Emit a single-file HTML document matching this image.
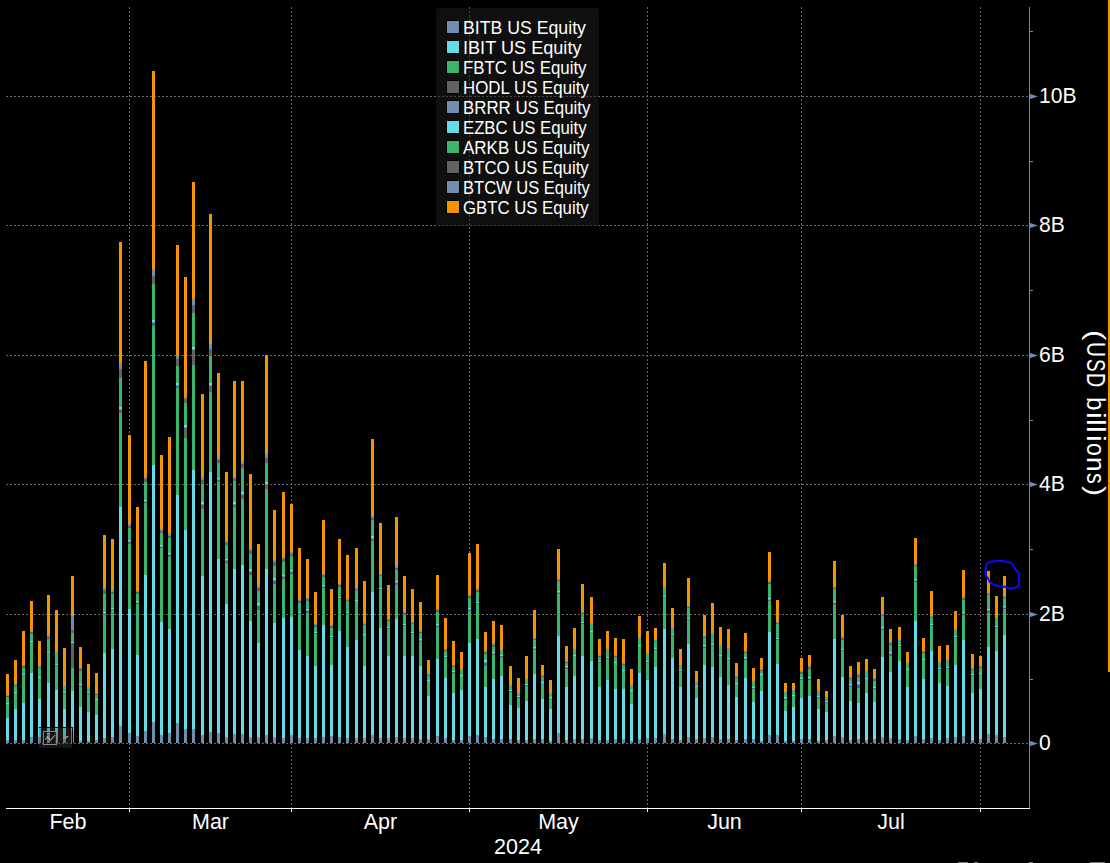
<!DOCTYPE html>
<html><head><meta charset="utf-8">
<style>
html,body{margin:0;padding:0;background:#000;}
body{width:1110px;height:863px;position:relative;overflow:hidden;font-family:"Liberation Sans",sans-serif;color:#fff;}
svg{position:absolute;left:0;top:0;}
.yl{position:absolute;left:1039px;font-size:21.5px;line-height:21.5px;white-space:nowrap;transform-origin:0 0;transform:scale(0.98,1.055);}
.ml{position:absolute;top:812px;width:80px;text-align:center;font-size:21.5px;line-height:21.5px;}
.yr{position:absolute;left:1039px;top:834px;}
.leg{position:absolute;left:436px;top:7.7px;width:163.3px;height:218.7px;background:rgba(32,32,32,0.46);border-radius:2px;}
.li{position:absolute;left:0;height:20px;}
.sw{position:absolute;left:10.5px;top:0;width:12px;height:12px;box-shadow:0 0 0 1px #000;}
.lt{position:absolute;transform-origin:0 0;left:26.5px;top:-1px;font-size:17.8px;line-height:17.8px;white-space:nowrap;}
.ulab{position:absolute;left:1109px;top:0;transform-origin:0 0;transform:rotate(90deg);width:600px;height:30px;}
.ulab span{position:absolute;top:0;transform-origin:0 0;font-size:26px;line-height:26px;}
</style></head><body>
<svg width="1110" height="863" viewBox="0 0 1110 863">
<line x1="129.5" y1="7" x2="129.5" y2="808" stroke="#646464" stroke-width="1" stroke-dasharray="2 2"/>
<line x1="291.5" y1="7" x2="291.5" y2="808" stroke="#646464" stroke-width="1" stroke-dasharray="2 2"/>
<line x1="469.5" y1="7" x2="469.5" y2="808" stroke="#646464" stroke-width="1" stroke-dasharray="2 2"/>
<line x1="647.5" y1="7" x2="647.5" y2="808" stroke="#646464" stroke-width="1" stroke-dasharray="2 2"/>
<line x1="801.5" y1="7" x2="801.5" y2="808" stroke="#646464" stroke-width="1" stroke-dasharray="2 2"/>
<line x1="980.5" y1="7" x2="980.5" y2="808" stroke="#646464" stroke-width="1" stroke-dasharray="2 2"/>
<line x1="6" y1="96.5" x2="1029" y2="96.5" stroke="#686868" stroke-width="1" stroke-dasharray="2 2"/>
<line x1="6" y1="225.5" x2="1029" y2="225.5" stroke="#686868" stroke-width="1" stroke-dasharray="2 2"/>
<line x1="6" y1="355.5" x2="1029" y2="355.5" stroke="#686868" stroke-width="1" stroke-dasharray="2 2"/>
<line x1="6" y1="484.5" x2="1029" y2="484.5" stroke="#686868" stroke-width="1" stroke-dasharray="2 2"/>
<line x1="6" y1="614.5" x2="1029" y2="614.5" stroke="#686868" stroke-width="1" stroke-dasharray="2 2"/>
<line x1="6" y1="743.5" x2="1029" y2="743.5" stroke="#686868" stroke-width="1" stroke-dasharray="2 2"/>
<rect x="6" y="674" width="3" height="21" fill="#f39400"/>
<rect x="6" y="695" width="3" height="1" fill="#728ead"/>
<rect x="6" y="696" width="3" height="1" fill="#626262"/>
<rect x="6" y="697" width="3" height="6" fill="#39b56d"/>
<rect x="6" y="703" width="3" height="1" fill="#66dce9"/>
<rect x="6" y="704" width="3" height="14" fill="#39b56d"/>
<rect x="6" y="718" width="3" height="22" fill="#66dce9"/>
<rect x="6" y="740" width="3" height="3" fill="#728ead"/>
<rect x="14" y="660" width="3" height="24" fill="#f39400"/>
<rect x="14" y="684" width="3" height="1" fill="#728ead"/>
<rect x="14" y="685" width="3" height="1" fill="#626262"/>
<rect x="14" y="686" width="3" height="6" fill="#39b56d"/>
<rect x="14" y="692" width="3" height="1" fill="#66dce9"/>
<rect x="14" y="693" width="3" height="16" fill="#39b56d"/>
<rect x="14" y="709" width="3" height="31" fill="#66dce9"/>
<rect x="14" y="740" width="3" height="3" fill="#728ead"/>
<rect x="22" y="631" width="3" height="34" fill="#f39400"/>
<rect x="22" y="665" width="3" height="1" fill="#728ead"/>
<rect x="22" y="666" width="3" height="2" fill="#626262"/>
<rect x="22" y="668" width="3" height="6" fill="#39b56d"/>
<rect x="22" y="674" width="3" height="1" fill="#66dce9"/>
<rect x="22" y="675" width="3" height="1" fill="#626262"/>
<rect x="22" y="676" width="3" height="27" fill="#39b56d"/>
<rect x="22" y="703" width="3" height="37" fill="#66dce9"/>
<rect x="22" y="740" width="3" height="3" fill="#728ead"/>
<rect x="30" y="601" width="3" height="30" fill="#f39400"/>
<rect x="30" y="631" width="3" height="1" fill="#728ead"/>
<rect x="30" y="632" width="3" height="2" fill="#626262"/>
<rect x="30" y="634" width="3" height="7" fill="#39b56d"/>
<rect x="30" y="641" width="3" height="1" fill="#66dce9"/>
<rect x="30" y="642" width="3" height="31" fill="#39b56d"/>
<rect x="30" y="673" width="3" height="64" fill="#66dce9"/>
<rect x="30" y="737" width="3" height="6" fill="#728ead"/>
<rect x="38" y="641" width="3" height="25" fill="#f39400"/>
<rect x="38" y="666" width="3" height="1" fill="#728ead"/>
<rect x="38" y="667" width="3" height="1" fill="#626262"/>
<rect x="38" y="668" width="3" height="9" fill="#39b56d"/>
<rect x="38" y="677" width="3" height="1" fill="#66dce9"/>
<rect x="38" y="678" width="3" height="21" fill="#39b56d"/>
<rect x="38" y="699" width="3" height="38" fill="#66dce9"/>
<rect x="38" y="737" width="3" height="6" fill="#728ead"/>
<rect x="47" y="595" width="3" height="40" fill="#f39400"/>
<rect x="47" y="635" width="3" height="2" fill="#728ead"/>
<rect x="47" y="637" width="3" height="2" fill="#626262"/>
<rect x="47" y="639" width="3" height="13" fill="#39b56d"/>
<rect x="47" y="652" width="3" height="1" fill="#66dce9"/>
<rect x="47" y="653" width="3" height="1" fill="#626262"/>
<rect x="47" y="654" width="3" height="29" fill="#39b56d"/>
<rect x="47" y="683" width="3" height="51" fill="#66dce9"/>
<rect x="47" y="734" width="3" height="9" fill="#728ead"/>
<rect x="55" y="610" width="3" height="42" fill="#f39400"/>
<rect x="55" y="652" width="3" height="12" fill="#39b56d"/>
<rect x="55" y="664" width="3" height="1" fill="#66dce9"/>
<rect x="55" y="665" width="3" height="1" fill="#626262"/>
<rect x="55" y="666" width="3" height="24" fill="#39b56d"/>
<rect x="55" y="690" width="3" height="44" fill="#66dce9"/>
<rect x="55" y="734" width="3" height="9" fill="#728ead"/>
<rect x="63" y="648" width="3" height="38" fill="#f39400"/>
<rect x="63" y="686" width="3" height="1" fill="#728ead"/>
<rect x="63" y="687" width="3" height="5" fill="#39b56d"/>
<rect x="63" y="692" width="3" height="1" fill="#66dce9"/>
<rect x="63" y="693" width="3" height="1" fill="#626262"/>
<rect x="63" y="694" width="3" height="15" fill="#39b56d"/>
<rect x="63" y="709" width="3" height="30" fill="#66dce9"/>
<rect x="63" y="739" width="3" height="4" fill="#728ead"/>
<rect x="71" y="576" width="3" height="40" fill="#f39400"/>
<rect x="71" y="616" width="3" height="14" fill="#728ead"/>
<rect x="71" y="630" width="3" height="3" fill="#626262"/>
<rect x="71" y="633" width="3" height="9" fill="#39b56d"/>
<rect x="71" y="642" width="3" height="1" fill="#66dce9"/>
<rect x="71" y="643" width="3" height="25" fill="#626262"/>
<rect x="71" y="668" width="3" height="23" fill="#39b56d"/>
<rect x="71" y="691" width="3" height="40" fill="#66dce9"/>
<rect x="71" y="731" width="3" height="12" fill="#728ead"/>
<rect x="79" y="647" width="3" height="21" fill="#f39400"/>
<rect x="79" y="668" width="3" height="1" fill="#728ead"/>
<rect x="79" y="669" width="3" height="2" fill="#626262"/>
<rect x="79" y="671" width="3" height="13" fill="#39b56d"/>
<rect x="79" y="684" width="3" height="1" fill="#66dce9"/>
<rect x="79" y="685" width="3" height="1" fill="#728ead"/>
<rect x="79" y="686" width="3" height="1" fill="#626262"/>
<rect x="79" y="687" width="3" height="20" fill="#39b56d"/>
<rect x="79" y="707" width="3" height="34" fill="#66dce9"/>
<rect x="79" y="741" width="3" height="2" fill="#728ead"/>
<rect x="87" y="664" width="3" height="23" fill="#f39400"/>
<rect x="87" y="687" width="3" height="1" fill="#728ead"/>
<rect x="87" y="688" width="3" height="4" fill="#39b56d"/>
<rect x="87" y="692" width="3" height="1" fill="#66dce9"/>
<rect x="87" y="693" width="3" height="1" fill="#626262"/>
<rect x="87" y="694" width="3" height="18" fill="#39b56d"/>
<rect x="87" y="712" width="3" height="29" fill="#66dce9"/>
<rect x="87" y="741" width="3" height="2" fill="#728ead"/>
<rect x="95" y="673" width="3" height="20" fill="#f39400"/>
<rect x="95" y="693" width="3" height="1" fill="#728ead"/>
<rect x="95" y="694" width="3" height="1" fill="#626262"/>
<rect x="95" y="695" width="3" height="4" fill="#39b56d"/>
<rect x="95" y="699" width="3" height="1" fill="#66dce9"/>
<rect x="95" y="700" width="3" height="15" fill="#39b56d"/>
<rect x="95" y="715" width="3" height="25" fill="#66dce9"/>
<rect x="95" y="740" width="3" height="3" fill="#728ead"/>
<rect x="103" y="535" width="3" height="53" fill="#f39400"/>
<rect x="103" y="588" width="3" height="2" fill="#728ead"/>
<rect x="103" y="590" width="3" height="4" fill="#626262"/>
<rect x="103" y="594" width="3" height="18" fill="#39b56d"/>
<rect x="103" y="612" width="3" height="1" fill="#66dce9"/>
<rect x="103" y="613" width="3" height="1" fill="#728ead"/>
<rect x="103" y="614" width="3" height="1" fill="#626262"/>
<rect x="103" y="615" width="3" height="38" fill="#39b56d"/>
<rect x="103" y="653" width="3" height="85" fill="#66dce9"/>
<rect x="103" y="738" width="3" height="5" fill="#728ead"/>
<rect x="111" y="539" width="3" height="51" fill="#f39400"/>
<rect x="111" y="590" width="3" height="2" fill="#728ead"/>
<rect x="111" y="592" width="3" height="2" fill="#626262"/>
<rect x="111" y="594" width="3" height="14" fill="#39b56d"/>
<rect x="111" y="608" width="3" height="1" fill="#66dce9"/>
<rect x="111" y="609" width="3" height="1" fill="#626262"/>
<rect x="111" y="610" width="3" height="39" fill="#39b56d"/>
<rect x="111" y="649" width="3" height="88" fill="#66dce9"/>
<rect x="111" y="737" width="3" height="6" fill="#728ead"/>
<rect x="119" y="242" width="3" height="121" fill="#f39400"/>
<rect x="119" y="363" width="3" height="6" fill="#728ead"/>
<rect x="119" y="369" width="3" height="9" fill="#626262"/>
<rect x="119" y="378" width="3" height="29" fill="#39b56d"/>
<rect x="119" y="407" width="3" height="2" fill="#66dce9"/>
<rect x="119" y="409" width="3" height="1" fill="#728ead"/>
<rect x="119" y="410" width="3" height="3" fill="#626262"/>
<rect x="119" y="413" width="3" height="94" fill="#39b56d"/>
<rect x="119" y="507" width="3" height="219" fill="#66dce9"/>
<rect x="119" y="726" width="3" height="17" fill="#728ead"/>
<rect x="128" y="435" width="3" height="89" fill="#f39400"/>
<rect x="128" y="524" width="3" height="2" fill="#728ead"/>
<rect x="128" y="526" width="3" height="2" fill="#626262"/>
<rect x="128" y="528" width="3" height="12" fill="#39b56d"/>
<rect x="128" y="540" width="3" height="1" fill="#66dce9"/>
<rect x="128" y="541" width="3" height="1" fill="#728ead"/>
<rect x="128" y="542" width="3" height="2" fill="#626262"/>
<rect x="128" y="544" width="3" height="65" fill="#39b56d"/>
<rect x="128" y="609" width="3" height="124" fill="#66dce9"/>
<rect x="128" y="733" width="3" height="10" fill="#728ead"/>
<rect x="136" y="507" width="3" height="84" fill="#f39400"/>
<rect x="136" y="591" width="3" height="1" fill="#728ead"/>
<rect x="136" y="592" width="3" height="2" fill="#626262"/>
<rect x="136" y="594" width="3" height="7" fill="#39b56d"/>
<rect x="136" y="601" width="3" height="1" fill="#66dce9"/>
<rect x="136" y="602" width="3" height="1" fill="#728ead"/>
<rect x="136" y="603" width="3" height="1" fill="#626262"/>
<rect x="136" y="604" width="3" height="51" fill="#39b56d"/>
<rect x="136" y="655" width="3" height="81" fill="#66dce9"/>
<rect x="136" y="736" width="3" height="7" fill="#728ead"/>
<rect x="144" y="361" width="3" height="116" fill="#f39400"/>
<rect x="144" y="477" width="3" height="2" fill="#728ead"/>
<rect x="144" y="479" width="3" height="3" fill="#626262"/>
<rect x="144" y="482" width="3" height="18" fill="#39b56d"/>
<rect x="144" y="500" width="3" height="1" fill="#66dce9"/>
<rect x="144" y="501" width="3" height="1" fill="#728ead"/>
<rect x="144" y="502" width="3" height="1" fill="#626262"/>
<rect x="144" y="503" width="3" height="72" fill="#39b56d"/>
<rect x="144" y="575" width="3" height="156" fill="#66dce9"/>
<rect x="144" y="731" width="3" height="12" fill="#728ead"/>
<rect x="152" y="71" width="3" height="199" fill="#f39400"/>
<rect x="152" y="270" width="3" height="6" fill="#728ead"/>
<rect x="152" y="276" width="3" height="8" fill="#626262"/>
<rect x="152" y="284" width="3" height="36" fill="#39b56d"/>
<rect x="152" y="320" width="3" height="2" fill="#66dce9"/>
<rect x="152" y="322" width="3" height="1" fill="#728ead"/>
<rect x="152" y="323" width="3" height="3" fill="#626262"/>
<rect x="152" y="326" width="3" height="139" fill="#39b56d"/>
<rect x="152" y="465" width="3" height="257" fill="#66dce9"/>
<rect x="152" y="722" width="3" height="21" fill="#728ead"/>
<rect x="160" y="455" width="3" height="74" fill="#f39400"/>
<rect x="160" y="529" width="3" height="2" fill="#728ead"/>
<rect x="160" y="531" width="3" height="2" fill="#626262"/>
<rect x="160" y="533" width="3" height="12" fill="#39b56d"/>
<rect x="160" y="545" width="3" height="1" fill="#66dce9"/>
<rect x="160" y="546" width="3" height="1" fill="#728ead"/>
<rect x="160" y="547" width="3" height="1" fill="#626262"/>
<rect x="160" y="548" width="3" height="74" fill="#39b56d"/>
<rect x="160" y="622" width="3" height="113" fill="#66dce9"/>
<rect x="160" y="735" width="3" height="8" fill="#728ead"/>
<rect x="168" y="437" width="3" height="97" fill="#f39400"/>
<rect x="168" y="534" width="3" height="2" fill="#728ead"/>
<rect x="168" y="536" width="3" height="2" fill="#626262"/>
<rect x="168" y="538" width="3" height="15" fill="#39b56d"/>
<rect x="168" y="553" width="3" height="1" fill="#66dce9"/>
<rect x="168" y="554" width="3" height="1" fill="#728ead"/>
<rect x="168" y="555" width="3" height="2" fill="#626262"/>
<rect x="168" y="557" width="3" height="72" fill="#39b56d"/>
<rect x="168" y="629" width="3" height="104" fill="#66dce9"/>
<rect x="168" y="733" width="3" height="10" fill="#728ead"/>
<rect x="176" y="245" width="3" height="110" fill="#f39400"/>
<rect x="176" y="355" width="3" height="4" fill="#728ead"/>
<rect x="176" y="359" width="3" height="7" fill="#626262"/>
<rect x="176" y="366" width="3" height="17" fill="#39b56d"/>
<rect x="176" y="383" width="3" height="2" fill="#66dce9"/>
<rect x="176" y="385" width="3" height="1" fill="#728ead"/>
<rect x="176" y="386" width="3" height="2" fill="#626262"/>
<rect x="176" y="388" width="3" height="107" fill="#39b56d"/>
<rect x="176" y="495" width="3" height="228" fill="#66dce9"/>
<rect x="176" y="723" width="3" height="20" fill="#728ead"/>
<rect x="184" y="277" width="3" height="120" fill="#f39400"/>
<rect x="184" y="397" width="3" height="2" fill="#728ead"/>
<rect x="184" y="399" width="3" height="4" fill="#626262"/>
<rect x="184" y="403" width="3" height="22" fill="#39b56d"/>
<rect x="184" y="425" width="3" height="2" fill="#66dce9"/>
<rect x="184" y="427" width="3" height="1" fill="#728ead"/>
<rect x="184" y="428" width="3" height="10" fill="#626262"/>
<rect x="184" y="438" width="3" height="92" fill="#39b56d"/>
<rect x="184" y="530" width="3" height="199" fill="#66dce9"/>
<rect x="184" y="729" width="3" height="14" fill="#728ead"/>
<rect x="192" y="182" width="3" height="117" fill="#f39400"/>
<rect x="192" y="299" width="3" height="6" fill="#728ead"/>
<rect x="192" y="305" width="3" height="8" fill="#626262"/>
<rect x="192" y="313" width="3" height="34" fill="#39b56d"/>
<rect x="192" y="347" width="3" height="2" fill="#66dce9"/>
<rect x="192" y="349" width="3" height="1" fill="#728ead"/>
<rect x="192" y="350" width="3" height="15" fill="#626262"/>
<rect x="192" y="365" width="3" height="105" fill="#39b56d"/>
<rect x="192" y="470" width="3" height="259" fill="#66dce9"/>
<rect x="192" y="729" width="3" height="14" fill="#728ead"/>
<rect x="201" y="394" width="3" height="83" fill="#f39400"/>
<rect x="201" y="477" width="3" height="3" fill="#728ead"/>
<rect x="201" y="480" width="3" height="4" fill="#626262"/>
<rect x="201" y="484" width="3" height="18" fill="#39b56d"/>
<rect x="201" y="502" width="3" height="2" fill="#66dce9"/>
<rect x="201" y="504" width="3" height="1" fill="#728ead"/>
<rect x="201" y="505" width="3" height="4" fill="#626262"/>
<rect x="201" y="509" width="3" height="67" fill="#39b56d"/>
<rect x="201" y="576" width="3" height="159" fill="#66dce9"/>
<rect x="201" y="735" width="3" height="8" fill="#728ead"/>
<rect x="209" y="214" width="3" height="130" fill="#f39400"/>
<rect x="209" y="344" width="3" height="5" fill="#728ead"/>
<rect x="209" y="349" width="3" height="7" fill="#626262"/>
<rect x="209" y="356" width="3" height="27" fill="#39b56d"/>
<rect x="209" y="383" width="3" height="2" fill="#66dce9"/>
<rect x="209" y="385" width="3" height="1" fill="#728ead"/>
<rect x="209" y="386" width="3" height="6" fill="#626262"/>
<rect x="209" y="392" width="3" height="80" fill="#39b56d"/>
<rect x="209" y="472" width="3" height="260" fill="#66dce9"/>
<rect x="209" y="732" width="3" height="11" fill="#728ead"/>
<rect x="217" y="373" width="3" height="85" fill="#f39400"/>
<rect x="217" y="458" width="3" height="2" fill="#728ead"/>
<rect x="217" y="460" width="3" height="3" fill="#626262"/>
<rect x="217" y="463" width="3" height="15" fill="#39b56d"/>
<rect x="217" y="478" width="3" height="1" fill="#66dce9"/>
<rect x="217" y="479" width="3" height="1" fill="#728ead"/>
<rect x="217" y="480" width="3" height="2" fill="#626262"/>
<rect x="217" y="482" width="3" height="77" fill="#39b56d"/>
<rect x="217" y="559" width="3" height="174" fill="#66dce9"/>
<rect x="217" y="733" width="3" height="10" fill="#728ead"/>
<rect x="225" y="472" width="3" height="69" fill="#f39400"/>
<rect x="225" y="541" width="3" height="2" fill="#728ead"/>
<rect x="225" y="543" width="3" height="2" fill="#626262"/>
<rect x="225" y="545" width="3" height="14" fill="#39b56d"/>
<rect x="225" y="559" width="3" height="1" fill="#66dce9"/>
<rect x="225" y="560" width="3" height="1" fill="#728ead"/>
<rect x="225" y="561" width="3" height="2" fill="#626262"/>
<rect x="225" y="563" width="3" height="41" fill="#39b56d"/>
<rect x="225" y="604" width="3" height="133" fill="#66dce9"/>
<rect x="225" y="737" width="3" height="6" fill="#728ead"/>
<rect x="233" y="381" width="3" height="96" fill="#f39400"/>
<rect x="233" y="477" width="3" height="2" fill="#728ead"/>
<rect x="233" y="479" width="3" height="2" fill="#626262"/>
<rect x="233" y="481" width="3" height="21" fill="#39b56d"/>
<rect x="233" y="502" width="3" height="2" fill="#66dce9"/>
<rect x="233" y="504" width="3" height="1" fill="#728ead"/>
<rect x="233" y="505" width="3" height="2" fill="#626262"/>
<rect x="233" y="507" width="3" height="62" fill="#39b56d"/>
<rect x="233" y="569" width="3" height="165" fill="#66dce9"/>
<rect x="233" y="734" width="3" height="9" fill="#728ead"/>
<rect x="241" y="381" width="3" height="81" fill="#f39400"/>
<rect x="241" y="462" width="3" height="2" fill="#728ead"/>
<rect x="241" y="464" width="3" height="4" fill="#626262"/>
<rect x="241" y="468" width="3" height="24" fill="#39b56d"/>
<rect x="241" y="492" width="3" height="2" fill="#66dce9"/>
<rect x="241" y="494" width="3" height="1" fill="#728ead"/>
<rect x="241" y="495" width="3" height="4" fill="#626262"/>
<rect x="241" y="499" width="3" height="66" fill="#39b56d"/>
<rect x="241" y="565" width="3" height="169" fill="#66dce9"/>
<rect x="241" y="734" width="3" height="9" fill="#728ead"/>
<rect x="249" y="474" width="3" height="75" fill="#f39400"/>
<rect x="249" y="549" width="3" height="2" fill="#728ead"/>
<rect x="249" y="551" width="3" height="3" fill="#626262"/>
<rect x="249" y="554" width="3" height="15" fill="#39b56d"/>
<rect x="249" y="569" width="3" height="2" fill="#66dce9"/>
<rect x="249" y="571" width="3" height="1" fill="#728ead"/>
<rect x="249" y="572" width="3" height="3" fill="#626262"/>
<rect x="249" y="575" width="3" height="46" fill="#39b56d"/>
<rect x="249" y="621" width="3" height="116" fill="#66dce9"/>
<rect x="249" y="737" width="3" height="6" fill="#728ead"/>
<rect x="257" y="544" width="3" height="42" fill="#f39400"/>
<rect x="257" y="586" width="3" height="2" fill="#728ead"/>
<rect x="257" y="588" width="3" height="3" fill="#626262"/>
<rect x="257" y="591" width="3" height="12" fill="#39b56d"/>
<rect x="257" y="603" width="3" height="2" fill="#66dce9"/>
<rect x="257" y="605" width="3" height="1" fill="#728ead"/>
<rect x="257" y="606" width="3" height="4" fill="#626262"/>
<rect x="257" y="610" width="3" height="33" fill="#39b56d"/>
<rect x="257" y="643" width="3" height="94" fill="#66dce9"/>
<rect x="257" y="737" width="3" height="6" fill="#728ead"/>
<rect x="265" y="355" width="3" height="99" fill="#f39400"/>
<rect x="265" y="454" width="3" height="4" fill="#728ead"/>
<rect x="265" y="458" width="3" height="5" fill="#626262"/>
<rect x="265" y="463" width="3" height="19" fill="#39b56d"/>
<rect x="265" y="482" width="3" height="2" fill="#66dce9"/>
<rect x="265" y="484" width="3" height="1" fill="#728ead"/>
<rect x="265" y="485" width="3" height="4" fill="#626262"/>
<rect x="265" y="489" width="3" height="80" fill="#39b56d"/>
<rect x="265" y="569" width="3" height="166" fill="#66dce9"/>
<rect x="265" y="735" width="3" height="8" fill="#728ead"/>
<rect x="273" y="510" width="3" height="50" fill="#f39400"/>
<rect x="273" y="560" width="3" height="2" fill="#728ead"/>
<rect x="273" y="562" width="3" height="4" fill="#626262"/>
<rect x="273" y="566" width="3" height="12" fill="#39b56d"/>
<rect x="273" y="578" width="3" height="2" fill="#66dce9"/>
<rect x="273" y="580" width="3" height="1" fill="#728ead"/>
<rect x="273" y="581" width="3" height="3" fill="#626262"/>
<rect x="273" y="584" width="3" height="39" fill="#39b56d"/>
<rect x="273" y="623" width="3" height="114" fill="#66dce9"/>
<rect x="273" y="737" width="3" height="6" fill="#728ead"/>
<rect x="282" y="492" width="3" height="65" fill="#f39400"/>
<rect x="282" y="557" width="3" height="2" fill="#728ead"/>
<rect x="282" y="559" width="3" height="3" fill="#626262"/>
<rect x="282" y="562" width="3" height="13" fill="#39b56d"/>
<rect x="282" y="575" width="3" height="1" fill="#66dce9"/>
<rect x="282" y="576" width="3" height="1" fill="#728ead"/>
<rect x="282" y="577" width="3" height="2" fill="#626262"/>
<rect x="282" y="579" width="3" height="39" fill="#39b56d"/>
<rect x="282" y="618" width="3" height="120" fill="#66dce9"/>
<rect x="282" y="738" width="3" height="5" fill="#728ead"/>
<rect x="290" y="504" width="3" height="48" fill="#f39400"/>
<rect x="290" y="552" width="3" height="2" fill="#728ead"/>
<rect x="290" y="554" width="3" height="2" fill="#626262"/>
<rect x="290" y="556" width="3" height="14" fill="#39b56d"/>
<rect x="290" y="570" width="3" height="1" fill="#66dce9"/>
<rect x="290" y="571" width="3" height="1" fill="#728ead"/>
<rect x="290" y="572" width="3" height="2" fill="#626262"/>
<rect x="290" y="574" width="3" height="43" fill="#39b56d"/>
<rect x="290" y="617" width="3" height="118" fill="#66dce9"/>
<rect x="290" y="735" width="3" height="8" fill="#728ead"/>
<rect x="298" y="548" width="3" height="52" fill="#f39400"/>
<rect x="298" y="600" width="3" height="1" fill="#728ead"/>
<rect x="298" y="601" width="3" height="2" fill="#626262"/>
<rect x="298" y="603" width="3" height="9" fill="#39b56d"/>
<rect x="298" y="612" width="3" height="1" fill="#66dce9"/>
<rect x="298" y="613" width="3" height="1" fill="#626262"/>
<rect x="298" y="614" width="3" height="36" fill="#39b56d"/>
<rect x="298" y="650" width="3" height="88" fill="#66dce9"/>
<rect x="298" y="738" width="3" height="5" fill="#728ead"/>
<rect x="306" y="559" width="3" height="39" fill="#f39400"/>
<rect x="306" y="598" width="3" height="1" fill="#728ead"/>
<rect x="306" y="599" width="3" height="2" fill="#626262"/>
<rect x="306" y="601" width="3" height="8" fill="#39b56d"/>
<rect x="306" y="609" width="3" height="1" fill="#66dce9"/>
<rect x="306" y="610" width="3" height="1" fill="#728ead"/>
<rect x="306" y="611" width="3" height="2" fill="#626262"/>
<rect x="306" y="613" width="3" height="43" fill="#39b56d"/>
<rect x="306" y="656" width="3" height="82" fill="#66dce9"/>
<rect x="306" y="738" width="3" height="5" fill="#728ead"/>
<rect x="314" y="592" width="3" height="32" fill="#f39400"/>
<rect x="314" y="624" width="3" height="1" fill="#728ead"/>
<rect x="314" y="625" width="3" height="2" fill="#626262"/>
<rect x="314" y="627" width="3" height="5" fill="#39b56d"/>
<rect x="314" y="632" width="3" height="1" fill="#66dce9"/>
<rect x="314" y="633" width="3" height="1" fill="#626262"/>
<rect x="314" y="634" width="3" height="32" fill="#39b56d"/>
<rect x="314" y="666" width="3" height="72" fill="#66dce9"/>
<rect x="314" y="738" width="3" height="5" fill="#728ead"/>
<rect x="322" y="520" width="3" height="54" fill="#f39400"/>
<rect x="322" y="574" width="3" height="1" fill="#728ead"/>
<rect x="322" y="575" width="3" height="2" fill="#626262"/>
<rect x="322" y="577" width="3" height="8" fill="#39b56d"/>
<rect x="322" y="585" width="3" height="1" fill="#66dce9"/>
<rect x="322" y="586" width="3" height="1" fill="#728ead"/>
<rect x="322" y="587" width="3" height="1" fill="#626262"/>
<rect x="322" y="588" width="3" height="37" fill="#39b56d"/>
<rect x="322" y="625" width="3" height="112" fill="#66dce9"/>
<rect x="322" y="737" width="3" height="6" fill="#728ead"/>
<rect x="330" y="589" width="3" height="36" fill="#f39400"/>
<rect x="330" y="625" width="3" height="1" fill="#728ead"/>
<rect x="330" y="626" width="3" height="2" fill="#626262"/>
<rect x="330" y="628" width="3" height="8" fill="#39b56d"/>
<rect x="330" y="636" width="3" height="1" fill="#66dce9"/>
<rect x="330" y="637" width="3" height="1" fill="#626262"/>
<rect x="330" y="638" width="3" height="27" fill="#39b56d"/>
<rect x="330" y="665" width="3" height="71" fill="#66dce9"/>
<rect x="330" y="736" width="3" height="7" fill="#728ead"/>
<rect x="338" y="539" width="3" height="45" fill="#f39400"/>
<rect x="338" y="584" width="3" height="1" fill="#728ead"/>
<rect x="338" y="585" width="3" height="2" fill="#626262"/>
<rect x="338" y="587" width="3" height="10" fill="#39b56d"/>
<rect x="338" y="597" width="3" height="1" fill="#66dce9"/>
<rect x="338" y="598" width="3" height="1" fill="#626262"/>
<rect x="338" y="599" width="3" height="32" fill="#39b56d"/>
<rect x="338" y="631" width="3" height="106" fill="#66dce9"/>
<rect x="338" y="737" width="3" height="6" fill="#728ead"/>
<rect x="346" y="555" width="3" height="44" fill="#f39400"/>
<rect x="346" y="599" width="3" height="1" fill="#728ead"/>
<rect x="346" y="600" width="3" height="1" fill="#626262"/>
<rect x="346" y="601" width="3" height="11" fill="#39b56d"/>
<rect x="346" y="612" width="3" height="1" fill="#66dce9"/>
<rect x="346" y="613" width="3" height="1" fill="#626262"/>
<rect x="346" y="614" width="3" height="33" fill="#39b56d"/>
<rect x="346" y="647" width="3" height="91" fill="#66dce9"/>
<rect x="346" y="738" width="3" height="5" fill="#728ead"/>
<rect x="355" y="548" width="3" height="40" fill="#f39400"/>
<rect x="355" y="588" width="3" height="1" fill="#728ead"/>
<rect x="355" y="589" width="3" height="1" fill="#626262"/>
<rect x="355" y="590" width="3" height="10" fill="#39b56d"/>
<rect x="355" y="600" width="3" height="1" fill="#66dce9"/>
<rect x="355" y="601" width="3" height="39" fill="#39b56d"/>
<rect x="355" y="640" width="3" height="98" fill="#66dce9"/>
<rect x="355" y="738" width="3" height="5" fill="#728ead"/>
<rect x="363" y="581" width="3" height="42" fill="#f39400"/>
<rect x="363" y="623" width="3" height="1" fill="#728ead"/>
<rect x="363" y="624" width="3" height="1" fill="#626262"/>
<rect x="363" y="625" width="3" height="9" fill="#39b56d"/>
<rect x="363" y="634" width="3" height="1" fill="#66dce9"/>
<rect x="363" y="635" width="3" height="31" fill="#39b56d"/>
<rect x="363" y="666" width="3" height="72" fill="#66dce9"/>
<rect x="363" y="738" width="3" height="5" fill="#728ead"/>
<rect x="371" y="439" width="3" height="77" fill="#f39400"/>
<rect x="371" y="516" width="3" height="2" fill="#728ead"/>
<rect x="371" y="518" width="3" height="2" fill="#626262"/>
<rect x="371" y="520" width="3" height="16" fill="#39b56d"/>
<rect x="371" y="536" width="3" height="2" fill="#66dce9"/>
<rect x="371" y="538" width="3" height="1" fill="#728ead"/>
<rect x="371" y="539" width="3" height="2" fill="#626262"/>
<rect x="371" y="541" width="3" height="51" fill="#39b56d"/>
<rect x="371" y="592" width="3" height="143" fill="#66dce9"/>
<rect x="371" y="735" width="3" height="8" fill="#728ead"/>
<rect x="379" y="523" width="3" height="51" fill="#f39400"/>
<rect x="379" y="574" width="3" height="1" fill="#728ead"/>
<rect x="379" y="575" width="3" height="1" fill="#626262"/>
<rect x="379" y="576" width="3" height="12" fill="#39b56d"/>
<rect x="379" y="588" width="3" height="1" fill="#66dce9"/>
<rect x="379" y="589" width="3" height="1" fill="#626262"/>
<rect x="379" y="590" width="3" height="38" fill="#39b56d"/>
<rect x="379" y="628" width="3" height="110" fill="#66dce9"/>
<rect x="379" y="738" width="3" height="5" fill="#728ead"/>
<rect x="387" y="585" width="3" height="34" fill="#f39400"/>
<rect x="387" y="619" width="3" height="1" fill="#728ead"/>
<rect x="387" y="620" width="3" height="1" fill="#626262"/>
<rect x="387" y="621" width="3" height="6" fill="#39b56d"/>
<rect x="387" y="627" width="3" height="1" fill="#66dce9"/>
<rect x="387" y="628" width="3" height="1" fill="#626262"/>
<rect x="387" y="629" width="3" height="27" fill="#39b56d"/>
<rect x="387" y="656" width="3" height="82" fill="#66dce9"/>
<rect x="387" y="738" width="3" height="5" fill="#728ead"/>
<rect x="395" y="517" width="3" height="49" fill="#f39400"/>
<rect x="395" y="566" width="3" height="2" fill="#728ead"/>
<rect x="395" y="568" width="3" height="2" fill="#626262"/>
<rect x="395" y="570" width="3" height="11" fill="#39b56d"/>
<rect x="395" y="581" width="3" height="1" fill="#66dce9"/>
<rect x="395" y="582" width="3" height="1" fill="#728ead"/>
<rect x="395" y="583" width="3" height="2" fill="#626262"/>
<rect x="395" y="585" width="3" height="34" fill="#39b56d"/>
<rect x="395" y="619" width="3" height="118" fill="#66dce9"/>
<rect x="395" y="737" width="3" height="6" fill="#728ead"/>
<rect x="403" y="576" width="3" height="36" fill="#f39400"/>
<rect x="403" y="612" width="3" height="1" fill="#728ead"/>
<rect x="403" y="613" width="3" height="2" fill="#626262"/>
<rect x="403" y="615" width="3" height="9" fill="#39b56d"/>
<rect x="403" y="624" width="3" height="1" fill="#66dce9"/>
<rect x="403" y="625" width="3" height="1" fill="#626262"/>
<rect x="403" y="626" width="3" height="30" fill="#39b56d"/>
<rect x="403" y="656" width="3" height="82" fill="#66dce9"/>
<rect x="403" y="738" width="3" height="5" fill="#728ead"/>
<rect x="411" y="589" width="3" height="33" fill="#f39400"/>
<rect x="411" y="622" width="3" height="1" fill="#728ead"/>
<rect x="411" y="623" width="3" height="1" fill="#626262"/>
<rect x="411" y="624" width="3" height="8" fill="#39b56d"/>
<rect x="411" y="632" width="3" height="1" fill="#66dce9"/>
<rect x="411" y="633" width="3" height="1" fill="#626262"/>
<rect x="411" y="634" width="3" height="22" fill="#39b56d"/>
<rect x="411" y="656" width="3" height="82" fill="#66dce9"/>
<rect x="411" y="738" width="3" height="5" fill="#728ead"/>
<rect x="419" y="602" width="3" height="29" fill="#f39400"/>
<rect x="419" y="631" width="3" height="1" fill="#728ead"/>
<rect x="419" y="632" width="3" height="1" fill="#626262"/>
<rect x="419" y="633" width="3" height="6" fill="#39b56d"/>
<rect x="419" y="639" width="3" height="1" fill="#66dce9"/>
<rect x="419" y="640" width="3" height="1" fill="#728ead"/>
<rect x="419" y="641" width="3" height="1" fill="#626262"/>
<rect x="419" y="642" width="3" height="24" fill="#39b56d"/>
<rect x="419" y="666" width="3" height="73" fill="#66dce9"/>
<rect x="419" y="739" width="3" height="4" fill="#728ead"/>
<rect x="427" y="660" width="3" height="14" fill="#f39400"/>
<rect x="427" y="674" width="3" height="1" fill="#728ead"/>
<rect x="427" y="675" width="3" height="1" fill="#626262"/>
<rect x="427" y="676" width="3" height="4" fill="#39b56d"/>
<rect x="427" y="680" width="3" height="1" fill="#66dce9"/>
<rect x="427" y="681" width="3" height="15" fill="#39b56d"/>
<rect x="427" y="696" width="3" height="43" fill="#66dce9"/>
<rect x="427" y="739" width="3" height="4" fill="#728ead"/>
<rect x="436" y="575" width="3" height="34" fill="#f39400"/>
<rect x="436" y="609" width="3" height="1" fill="#728ead"/>
<rect x="436" y="610" width="3" height="2" fill="#626262"/>
<rect x="436" y="612" width="3" height="12" fill="#39b56d"/>
<rect x="436" y="624" width="3" height="1" fill="#66dce9"/>
<rect x="436" y="625" width="3" height="1" fill="#728ead"/>
<rect x="436" y="626" width="3" height="1" fill="#626262"/>
<rect x="436" y="627" width="3" height="32" fill="#39b56d"/>
<rect x="436" y="659" width="3" height="77" fill="#66dce9"/>
<rect x="436" y="736" width="3" height="7" fill="#728ead"/>
<rect x="444" y="618" width="3" height="31" fill="#f39400"/>
<rect x="444" y="649" width="3" height="1" fill="#728ead"/>
<rect x="444" y="650" width="3" height="1" fill="#626262"/>
<rect x="444" y="651" width="3" height="5" fill="#39b56d"/>
<rect x="444" y="656" width="3" height="1" fill="#66dce9"/>
<rect x="444" y="657" width="3" height="1" fill="#626262"/>
<rect x="444" y="658" width="3" height="20" fill="#39b56d"/>
<rect x="444" y="678" width="3" height="60" fill="#66dce9"/>
<rect x="444" y="738" width="3" height="5" fill="#728ead"/>
<rect x="452" y="641" width="3" height="24" fill="#f39400"/>
<rect x="452" y="665" width="3" height="1" fill="#728ead"/>
<rect x="452" y="666" width="3" height="1" fill="#626262"/>
<rect x="452" y="667" width="3" height="4" fill="#39b56d"/>
<rect x="452" y="671" width="3" height="1" fill="#66dce9"/>
<rect x="452" y="672" width="3" height="1" fill="#626262"/>
<rect x="452" y="673" width="3" height="20" fill="#39b56d"/>
<rect x="452" y="693" width="3" height="47" fill="#66dce9"/>
<rect x="452" y="740" width="3" height="3" fill="#728ead"/>
<rect x="460" y="652" width="3" height="17" fill="#f39400"/>
<rect x="460" y="669" width="3" height="1" fill="#728ead"/>
<rect x="460" y="670" width="3" height="5" fill="#39b56d"/>
<rect x="460" y="675" width="3" height="1" fill="#66dce9"/>
<rect x="460" y="676" width="3" height="14" fill="#39b56d"/>
<rect x="460" y="690" width="3" height="50" fill="#66dce9"/>
<rect x="460" y="740" width="3" height="3" fill="#728ead"/>
<rect x="468" y="553" width="3" height="42" fill="#f39400"/>
<rect x="468" y="595" width="3" height="1" fill="#728ead"/>
<rect x="468" y="596" width="3" height="2" fill="#626262"/>
<rect x="468" y="598" width="3" height="10" fill="#39b56d"/>
<rect x="468" y="608" width="3" height="1" fill="#66dce9"/>
<rect x="468" y="609" width="3" height="1" fill="#728ead"/>
<rect x="468" y="610" width="3" height="1" fill="#626262"/>
<rect x="468" y="611" width="3" height="32" fill="#39b56d"/>
<rect x="468" y="643" width="3" height="93" fill="#66dce9"/>
<rect x="468" y="736" width="3" height="7" fill="#728ead"/>
<rect x="476" y="544" width="3" height="45" fill="#f39400"/>
<rect x="476" y="589" width="3" height="1" fill="#728ead"/>
<rect x="476" y="590" width="3" height="2" fill="#626262"/>
<rect x="476" y="592" width="3" height="10" fill="#39b56d"/>
<rect x="476" y="602" width="3" height="1" fill="#66dce9"/>
<rect x="476" y="603" width="3" height="1" fill="#626262"/>
<rect x="476" y="604" width="3" height="35" fill="#39b56d"/>
<rect x="476" y="639" width="3" height="96" fill="#66dce9"/>
<rect x="476" y="735" width="3" height="8" fill="#728ead"/>
<rect x="484" y="632" width="3" height="19" fill="#f39400"/>
<rect x="484" y="651" width="3" height="1" fill="#728ead"/>
<rect x="484" y="652" width="3" height="2" fill="#626262"/>
<rect x="484" y="654" width="3" height="6" fill="#39b56d"/>
<rect x="484" y="660" width="3" height="2" fill="#66dce9"/>
<rect x="484" y="662" width="3" height="1" fill="#728ead"/>
<rect x="484" y="663" width="3" height="3" fill="#626262"/>
<rect x="484" y="666" width="3" height="21" fill="#39b56d"/>
<rect x="484" y="687" width="3" height="50" fill="#66dce9"/>
<rect x="484" y="737" width="3" height="6" fill="#728ead"/>
<rect x="492" y="621" width="3" height="22" fill="#f39400"/>
<rect x="492" y="643" width="3" height="2" fill="#728ead"/>
<rect x="492" y="645" width="3" height="2" fill="#626262"/>
<rect x="492" y="647" width="3" height="5" fill="#39b56d"/>
<rect x="492" y="652" width="3" height="1" fill="#66dce9"/>
<rect x="492" y="653" width="3" height="1" fill="#728ead"/>
<rect x="492" y="654" width="3" height="1" fill="#626262"/>
<rect x="492" y="655" width="3" height="24" fill="#39b56d"/>
<rect x="492" y="679" width="3" height="60" fill="#66dce9"/>
<rect x="492" y="739" width="3" height="4" fill="#728ead"/>
<rect x="500" y="625" width="3" height="25" fill="#f39400"/>
<rect x="500" y="650" width="3" height="1" fill="#728ead"/>
<rect x="500" y="651" width="3" height="4" fill="#39b56d"/>
<rect x="500" y="655" width="3" height="1" fill="#66dce9"/>
<rect x="500" y="656" width="3" height="1" fill="#626262"/>
<rect x="500" y="657" width="3" height="19" fill="#39b56d"/>
<rect x="500" y="676" width="3" height="63" fill="#66dce9"/>
<rect x="500" y="739" width="3" height="4" fill="#728ead"/>
<rect x="509" y="666" width="3" height="19" fill="#f39400"/>
<rect x="509" y="685" width="3" height="1" fill="#728ead"/>
<rect x="509" y="686" width="3" height="4" fill="#39b56d"/>
<rect x="509" y="690" width="3" height="1" fill="#66dce9"/>
<rect x="509" y="691" width="3" height="1" fill="#626262"/>
<rect x="509" y="692" width="3" height="13" fill="#39b56d"/>
<rect x="509" y="705" width="3" height="34" fill="#66dce9"/>
<rect x="509" y="739" width="3" height="4" fill="#728ead"/>
<rect x="517" y="678" width="3" height="15" fill="#f39400"/>
<rect x="517" y="693" width="3" height="1" fill="#728ead"/>
<rect x="517" y="694" width="3" height="2" fill="#39b56d"/>
<rect x="517" y="696" width="3" height="1" fill="#66dce9"/>
<rect x="517" y="697" width="3" height="1" fill="#626262"/>
<rect x="517" y="698" width="3" height="10" fill="#39b56d"/>
<rect x="517" y="708" width="3" height="32" fill="#66dce9"/>
<rect x="517" y="740" width="3" height="3" fill="#728ead"/>
<rect x="525" y="656" width="3" height="23" fill="#f39400"/>
<rect x="525" y="679" width="3" height="1" fill="#728ead"/>
<rect x="525" y="680" width="3" height="4" fill="#39b56d"/>
<rect x="525" y="684" width="3" height="1" fill="#66dce9"/>
<rect x="525" y="685" width="3" height="1" fill="#626262"/>
<rect x="525" y="686" width="3" height="15" fill="#39b56d"/>
<rect x="525" y="701" width="3" height="39" fill="#66dce9"/>
<rect x="525" y="740" width="3" height="3" fill="#728ead"/>
<rect x="533" y="610" width="3" height="28" fill="#f39400"/>
<rect x="533" y="638" width="3" height="1" fill="#728ead"/>
<rect x="533" y="639" width="3" height="1" fill="#626262"/>
<rect x="533" y="640" width="3" height="7" fill="#39b56d"/>
<rect x="533" y="647" width="3" height="1" fill="#66dce9"/>
<rect x="533" y="648" width="3" height="1" fill="#728ead"/>
<rect x="533" y="649" width="3" height="1" fill="#626262"/>
<rect x="533" y="650" width="3" height="24" fill="#39b56d"/>
<rect x="533" y="674" width="3" height="65" fill="#66dce9"/>
<rect x="533" y="739" width="3" height="4" fill="#728ead"/>
<rect x="541" y="665" width="3" height="10" fill="#f39400"/>
<rect x="541" y="675" width="3" height="1" fill="#728ead"/>
<rect x="541" y="676" width="3" height="1" fill="#626262"/>
<rect x="541" y="677" width="3" height="5" fill="#39b56d"/>
<rect x="541" y="682" width="3" height="1" fill="#66dce9"/>
<rect x="541" y="683" width="3" height="16" fill="#39b56d"/>
<rect x="541" y="699" width="3" height="40" fill="#66dce9"/>
<rect x="541" y="739" width="3" height="4" fill="#728ead"/>
<rect x="549" y="680" width="3" height="13" fill="#f39400"/>
<rect x="549" y="693" width="3" height="1" fill="#728ead"/>
<rect x="549" y="694" width="3" height="3" fill="#39b56d"/>
<rect x="549" y="697" width="3" height="1" fill="#66dce9"/>
<rect x="549" y="698" width="3" height="11" fill="#39b56d"/>
<rect x="549" y="709" width="3" height="32" fill="#66dce9"/>
<rect x="549" y="741" width="3" height="2" fill="#728ead"/>
<rect x="557" y="549" width="3" height="30" fill="#f39400"/>
<rect x="557" y="579" width="3" height="1" fill="#728ead"/>
<rect x="557" y="580" width="3" height="1" fill="#626262"/>
<rect x="557" y="581" width="3" height="10" fill="#39b56d"/>
<rect x="557" y="591" width="3" height="1" fill="#66dce9"/>
<rect x="557" y="592" width="3" height="1" fill="#728ead"/>
<rect x="557" y="593" width="3" height="1" fill="#626262"/>
<rect x="557" y="594" width="3" height="42" fill="#39b56d"/>
<rect x="557" y="636" width="3" height="97" fill="#66dce9"/>
<rect x="557" y="733" width="3" height="10" fill="#728ead"/>
<rect x="565" y="646" width="3" height="15" fill="#f39400"/>
<rect x="565" y="661" width="3" height="1" fill="#728ead"/>
<rect x="565" y="662" width="3" height="1" fill="#626262"/>
<rect x="565" y="663" width="3" height="3" fill="#39b56d"/>
<rect x="565" y="666" width="3" height="1" fill="#66dce9"/>
<rect x="565" y="667" width="3" height="1" fill="#728ead"/>
<rect x="565" y="668" width="3" height="1" fill="#626262"/>
<rect x="565" y="669" width="3" height="18" fill="#39b56d"/>
<rect x="565" y="687" width="3" height="53" fill="#66dce9"/>
<rect x="565" y="740" width="3" height="3" fill="#728ead"/>
<rect x="573" y="628" width="3" height="21" fill="#f39400"/>
<rect x="573" y="649" width="3" height="1" fill="#728ead"/>
<rect x="573" y="650" width="3" height="5" fill="#39b56d"/>
<rect x="573" y="655" width="3" height="1" fill="#66dce9"/>
<rect x="573" y="656" width="3" height="20" fill="#39b56d"/>
<rect x="573" y="676" width="3" height="63" fill="#66dce9"/>
<rect x="573" y="739" width="3" height="4" fill="#728ead"/>
<rect x="581" y="584" width="3" height="28" fill="#f39400"/>
<rect x="581" y="612" width="3" height="1" fill="#728ead"/>
<rect x="581" y="613" width="3" height="1" fill="#626262"/>
<rect x="581" y="614" width="3" height="8" fill="#39b56d"/>
<rect x="581" y="622" width="3" height="1" fill="#66dce9"/>
<rect x="581" y="623" width="3" height="1" fill="#626262"/>
<rect x="581" y="624" width="3" height="32" fill="#39b56d"/>
<rect x="581" y="656" width="3" height="83" fill="#66dce9"/>
<rect x="581" y="739" width="3" height="4" fill="#728ead"/>
<rect x="590" y="597" width="3" height="26" fill="#f39400"/>
<rect x="590" y="623" width="3" height="1" fill="#728ead"/>
<rect x="590" y="624" width="3" height="7" fill="#39b56d"/>
<rect x="590" y="631" width="3" height="1" fill="#66dce9"/>
<rect x="590" y="632" width="3" height="29" fill="#39b56d"/>
<rect x="590" y="661" width="3" height="77" fill="#66dce9"/>
<rect x="590" y="738" width="3" height="5" fill="#728ead"/>
<rect x="598" y="639" width="3" height="16" fill="#f39400"/>
<rect x="598" y="655" width="3" height="1" fill="#728ead"/>
<rect x="598" y="656" width="3" height="1" fill="#626262"/>
<rect x="598" y="657" width="3" height="4" fill="#39b56d"/>
<rect x="598" y="661" width="3" height="1" fill="#66dce9"/>
<rect x="598" y="662" width="3" height="1" fill="#626262"/>
<rect x="598" y="663" width="3" height="24" fill="#39b56d"/>
<rect x="598" y="687" width="3" height="53" fill="#66dce9"/>
<rect x="598" y="740" width="3" height="3" fill="#728ead"/>
<rect x="606" y="631" width="3" height="18" fill="#f39400"/>
<rect x="606" y="649" width="3" height="1" fill="#728ead"/>
<rect x="606" y="650" width="3" height="7" fill="#39b56d"/>
<rect x="606" y="657" width="3" height="1" fill="#66dce9"/>
<rect x="606" y="658" width="3" height="1" fill="#626262"/>
<rect x="606" y="659" width="3" height="21" fill="#39b56d"/>
<rect x="606" y="680" width="3" height="60" fill="#66dce9"/>
<rect x="606" y="740" width="3" height="3" fill="#728ead"/>
<rect x="614" y="638" width="3" height="17" fill="#f39400"/>
<rect x="614" y="655" width="3" height="1" fill="#728ead"/>
<rect x="614" y="656" width="3" height="1" fill="#626262"/>
<rect x="614" y="657" width="3" height="5" fill="#39b56d"/>
<rect x="614" y="662" width="3" height="1" fill="#66dce9"/>
<rect x="614" y="663" width="3" height="26" fill="#39b56d"/>
<rect x="614" y="689" width="3" height="50" fill="#66dce9"/>
<rect x="614" y="739" width="3" height="4" fill="#728ead"/>
<rect x="622" y="639" width="3" height="24" fill="#f39400"/>
<rect x="622" y="663" width="3" height="1" fill="#728ead"/>
<rect x="622" y="664" width="3" height="1" fill="#626262"/>
<rect x="622" y="665" width="3" height="5" fill="#39b56d"/>
<rect x="622" y="670" width="3" height="1" fill="#66dce9"/>
<rect x="622" y="671" width="3" height="18" fill="#39b56d"/>
<rect x="622" y="689" width="3" height="50" fill="#66dce9"/>
<rect x="622" y="739" width="3" height="4" fill="#728ead"/>
<rect x="630" y="669" width="3" height="16" fill="#f39400"/>
<rect x="630" y="685" width="3" height="1" fill="#728ead"/>
<rect x="630" y="686" width="3" height="4" fill="#39b56d"/>
<rect x="630" y="690" width="3" height="1" fill="#66dce9"/>
<rect x="630" y="691" width="3" height="13" fill="#39b56d"/>
<rect x="630" y="704" width="3" height="37" fill="#66dce9"/>
<rect x="630" y="741" width="3" height="2" fill="#728ead"/>
<rect x="638" y="616" width="3" height="22" fill="#f39400"/>
<rect x="638" y="638" width="3" height="1" fill="#728ead"/>
<rect x="638" y="639" width="3" height="6" fill="#39b56d"/>
<rect x="638" y="645" width="3" height="1" fill="#66dce9"/>
<rect x="638" y="646" width="3" height="27" fill="#39b56d"/>
<rect x="638" y="673" width="3" height="66" fill="#66dce9"/>
<rect x="638" y="739" width="3" height="4" fill="#728ead"/>
<rect x="646" y="631" width="3" height="22" fill="#f39400"/>
<rect x="646" y="653" width="3" height="1" fill="#728ead"/>
<rect x="646" y="654" width="3" height="7" fill="#39b56d"/>
<rect x="646" y="661" width="3" height="1" fill="#66dce9"/>
<rect x="646" y="662" width="3" height="1" fill="#626262"/>
<rect x="646" y="663" width="3" height="17" fill="#39b56d"/>
<rect x="646" y="680" width="3" height="58" fill="#66dce9"/>
<rect x="646" y="738" width="3" height="5" fill="#728ead"/>
<rect x="654" y="628" width="3" height="12" fill="#f39400"/>
<rect x="654" y="640" width="3" height="1" fill="#728ead"/>
<rect x="654" y="641" width="3" height="1" fill="#626262"/>
<rect x="654" y="642" width="3" height="6" fill="#39b56d"/>
<rect x="654" y="648" width="3" height="1" fill="#66dce9"/>
<rect x="654" y="649" width="3" height="1" fill="#626262"/>
<rect x="654" y="650" width="3" height="17" fill="#39b56d"/>
<rect x="654" y="667" width="3" height="71" fill="#66dce9"/>
<rect x="654" y="738" width="3" height="5" fill="#728ead"/>
<rect x="663" y="563" width="3" height="24" fill="#f39400"/>
<rect x="663" y="587" width="3" height="1" fill="#728ead"/>
<rect x="663" y="588" width="3" height="8" fill="#39b56d"/>
<rect x="663" y="596" width="3" height="1" fill="#66dce9"/>
<rect x="663" y="597" width="3" height="1" fill="#626262"/>
<rect x="663" y="598" width="3" height="31" fill="#39b56d"/>
<rect x="663" y="629" width="3" height="105" fill="#66dce9"/>
<rect x="663" y="734" width="3" height="9" fill="#728ead"/>
<rect x="671" y="608" width="3" height="20" fill="#f39400"/>
<rect x="671" y="628" width="3" height="1" fill="#728ead"/>
<rect x="671" y="629" width="3" height="5" fill="#39b56d"/>
<rect x="671" y="634" width="3" height="1" fill="#66dce9"/>
<rect x="671" y="635" width="3" height="1" fill="#626262"/>
<rect x="671" y="636" width="3" height="22" fill="#39b56d"/>
<rect x="671" y="658" width="3" height="81" fill="#66dce9"/>
<rect x="671" y="739" width="3" height="4" fill="#728ead"/>
<rect x="679" y="649" width="3" height="16" fill="#f39400"/>
<rect x="679" y="665" width="3" height="1" fill="#728ead"/>
<rect x="679" y="666" width="3" height="4" fill="#39b56d"/>
<rect x="679" y="670" width="3" height="1" fill="#66dce9"/>
<rect x="679" y="671" width="3" height="1" fill="#626262"/>
<rect x="679" y="672" width="3" height="15" fill="#39b56d"/>
<rect x="679" y="687" width="3" height="53" fill="#66dce9"/>
<rect x="679" y="740" width="3" height="3" fill="#728ead"/>
<rect x="687" y="578" width="3" height="28" fill="#f39400"/>
<rect x="687" y="606" width="3" height="1" fill="#728ead"/>
<rect x="687" y="607" width="3" height="1" fill="#626262"/>
<rect x="687" y="608" width="3" height="10" fill="#39b56d"/>
<rect x="687" y="618" width="3" height="1" fill="#66dce9"/>
<rect x="687" y="619" width="3" height="1" fill="#626262"/>
<rect x="687" y="620" width="3" height="24" fill="#39b56d"/>
<rect x="687" y="644" width="3" height="93" fill="#66dce9"/>
<rect x="687" y="737" width="3" height="6" fill="#728ead"/>
<rect x="695" y="671" width="3" height="11" fill="#f39400"/>
<rect x="695" y="682" width="3" height="1" fill="#728ead"/>
<rect x="695" y="683" width="3" height="3" fill="#39b56d"/>
<rect x="695" y="686" width="3" height="1" fill="#66dce9"/>
<rect x="695" y="687" width="3" height="11" fill="#39b56d"/>
<rect x="695" y="698" width="3" height="41" fill="#66dce9"/>
<rect x="695" y="739" width="3" height="4" fill="#728ead"/>
<rect x="703" y="615" width="3" height="21" fill="#f39400"/>
<rect x="703" y="636" width="3" height="1" fill="#728ead"/>
<rect x="703" y="637" width="3" height="1" fill="#626262"/>
<rect x="703" y="638" width="3" height="7" fill="#39b56d"/>
<rect x="703" y="645" width="3" height="1" fill="#66dce9"/>
<rect x="703" y="646" width="3" height="1" fill="#728ead"/>
<rect x="703" y="647" width="3" height="1" fill="#626262"/>
<rect x="703" y="648" width="3" height="17" fill="#39b56d"/>
<rect x="703" y="665" width="3" height="73" fill="#66dce9"/>
<rect x="703" y="738" width="3" height="5" fill="#728ead"/>
<rect x="711" y="603" width="3" height="30" fill="#f39400"/>
<rect x="711" y="633" width="3" height="1" fill="#728ead"/>
<rect x="711" y="634" width="3" height="10" fill="#39b56d"/>
<rect x="711" y="644" width="3" height="1" fill="#66dce9"/>
<rect x="711" y="645" width="3" height="1" fill="#626262"/>
<rect x="711" y="646" width="3" height="21" fill="#39b56d"/>
<rect x="711" y="667" width="3" height="70" fill="#66dce9"/>
<rect x="711" y="737" width="3" height="6" fill="#728ead"/>
<rect x="719" y="627" width="3" height="18" fill="#f39400"/>
<rect x="719" y="645" width="3" height="10" fill="#39b56d"/>
<rect x="719" y="655" width="3" height="1" fill="#66dce9"/>
<rect x="719" y="656" width="3" height="21" fill="#39b56d"/>
<rect x="719" y="677" width="3" height="62" fill="#66dce9"/>
<rect x="719" y="739" width="3" height="4" fill="#728ead"/>
<rect x="727" y="629" width="3" height="19" fill="#f39400"/>
<rect x="727" y="648" width="3" height="1" fill="#728ead"/>
<rect x="727" y="649" width="3" height="9" fill="#39b56d"/>
<rect x="727" y="658" width="3" height="1" fill="#66dce9"/>
<rect x="727" y="659" width="3" height="26" fill="#39b56d"/>
<rect x="727" y="685" width="3" height="54" fill="#66dce9"/>
<rect x="727" y="739" width="3" height="4" fill="#728ead"/>
<rect x="735" y="663" width="3" height="13" fill="#f39400"/>
<rect x="735" y="676" width="3" height="1" fill="#728ead"/>
<rect x="735" y="677" width="3" height="1" fill="#626262"/>
<rect x="735" y="678" width="3" height="5" fill="#39b56d"/>
<rect x="735" y="683" width="3" height="1" fill="#66dce9"/>
<rect x="735" y="684" width="3" height="13" fill="#39b56d"/>
<rect x="735" y="697" width="3" height="43" fill="#66dce9"/>
<rect x="735" y="740" width="3" height="3" fill="#728ead"/>
<rect x="744" y="633" width="3" height="18" fill="#f39400"/>
<rect x="744" y="651" width="3" height="1" fill="#728ead"/>
<rect x="744" y="652" width="3" height="1" fill="#626262"/>
<rect x="744" y="653" width="3" height="4" fill="#39b56d"/>
<rect x="744" y="657" width="3" height="1" fill="#66dce9"/>
<rect x="744" y="658" width="3" height="1" fill="#728ead"/>
<rect x="744" y="659" width="3" height="1" fill="#626262"/>
<rect x="744" y="660" width="3" height="18" fill="#39b56d"/>
<rect x="744" y="678" width="3" height="61" fill="#66dce9"/>
<rect x="744" y="739" width="3" height="4" fill="#728ead"/>
<rect x="752" y="668" width="3" height="13" fill="#f39400"/>
<rect x="752" y="681" width="3" height="1" fill="#728ead"/>
<rect x="752" y="682" width="3" height="5" fill="#39b56d"/>
<rect x="752" y="687" width="3" height="1" fill="#66dce9"/>
<rect x="752" y="688" width="3" height="1" fill="#626262"/>
<rect x="752" y="689" width="3" height="13" fill="#39b56d"/>
<rect x="752" y="702" width="3" height="37" fill="#66dce9"/>
<rect x="752" y="739" width="3" height="4" fill="#728ead"/>
<rect x="760" y="658" width="3" height="11" fill="#f39400"/>
<rect x="760" y="669" width="3" height="1" fill="#728ead"/>
<rect x="760" y="670" width="3" height="1" fill="#626262"/>
<rect x="760" y="671" width="3" height="3" fill="#39b56d"/>
<rect x="760" y="674" width="3" height="1" fill="#66dce9"/>
<rect x="760" y="675" width="3" height="16" fill="#39b56d"/>
<rect x="760" y="691" width="3" height="50" fill="#66dce9"/>
<rect x="760" y="741" width="3" height="2" fill="#728ead"/>
<rect x="768" y="552" width="3" height="29" fill="#f39400"/>
<rect x="768" y="581" width="3" height="1" fill="#728ead"/>
<rect x="768" y="582" width="3" height="2" fill="#626262"/>
<rect x="768" y="584" width="3" height="14" fill="#39b56d"/>
<rect x="768" y="598" width="3" height="1" fill="#66dce9"/>
<rect x="768" y="599" width="3" height="1" fill="#728ead"/>
<rect x="768" y="600" width="3" height="1" fill="#626262"/>
<rect x="768" y="601" width="3" height="31" fill="#39b56d"/>
<rect x="768" y="632" width="3" height="103" fill="#66dce9"/>
<rect x="768" y="735" width="3" height="8" fill="#728ead"/>
<rect x="776" y="600" width="3" height="22" fill="#f39400"/>
<rect x="776" y="622" width="3" height="1" fill="#728ead"/>
<rect x="776" y="623" width="3" height="1" fill="#626262"/>
<rect x="776" y="624" width="3" height="14" fill="#39b56d"/>
<rect x="776" y="638" width="3" height="1" fill="#66dce9"/>
<rect x="776" y="639" width="3" height="1" fill="#626262"/>
<rect x="776" y="640" width="3" height="24" fill="#39b56d"/>
<rect x="776" y="664" width="3" height="71" fill="#66dce9"/>
<rect x="776" y="735" width="3" height="8" fill="#728ead"/>
<rect x="784" y="683" width="3" height="9" fill="#f39400"/>
<rect x="784" y="692" width="3" height="1" fill="#728ead"/>
<rect x="784" y="693" width="3" height="4" fill="#39b56d"/>
<rect x="784" y="697" width="3" height="1" fill="#66dce9"/>
<rect x="784" y="698" width="3" height="1" fill="#728ead"/>
<rect x="784" y="699" width="3" height="1" fill="#626262"/>
<rect x="784" y="700" width="3" height="11" fill="#39b56d"/>
<rect x="784" y="711" width="3" height="30" fill="#66dce9"/>
<rect x="784" y="741" width="3" height="2" fill="#728ead"/>
<rect x="792" y="683" width="3" height="7" fill="#f39400"/>
<rect x="792" y="690" width="3" height="1" fill="#728ead"/>
<rect x="792" y="691" width="3" height="4" fill="#39b56d"/>
<rect x="792" y="695" width="3" height="1" fill="#66dce9"/>
<rect x="792" y="696" width="3" height="11" fill="#39b56d"/>
<rect x="792" y="707" width="3" height="34" fill="#66dce9"/>
<rect x="792" y="741" width="3" height="2" fill="#728ead"/>
<rect x="800" y="658" width="3" height="13" fill="#f39400"/>
<rect x="800" y="671" width="3" height="1" fill="#728ead"/>
<rect x="800" y="672" width="3" height="2" fill="#626262"/>
<rect x="800" y="674" width="3" height="4" fill="#39b56d"/>
<rect x="800" y="678" width="3" height="1" fill="#66dce9"/>
<rect x="800" y="679" width="3" height="1" fill="#626262"/>
<rect x="800" y="680" width="3" height="18" fill="#39b56d"/>
<rect x="800" y="698" width="3" height="41" fill="#66dce9"/>
<rect x="800" y="739" width="3" height="4" fill="#728ead"/>
<rect x="808" y="655" width="3" height="11" fill="#f39400"/>
<rect x="808" y="666" width="3" height="1" fill="#728ead"/>
<rect x="808" y="667" width="3" height="2" fill="#626262"/>
<rect x="808" y="669" width="3" height="8" fill="#39b56d"/>
<rect x="808" y="677" width="3" height="1" fill="#66dce9"/>
<rect x="808" y="678" width="3" height="1" fill="#728ead"/>
<rect x="808" y="679" width="3" height="1" fill="#626262"/>
<rect x="808" y="680" width="3" height="16" fill="#39b56d"/>
<rect x="808" y="696" width="3" height="43" fill="#66dce9"/>
<rect x="808" y="739" width="3" height="4" fill="#728ead"/>
<rect x="817" y="679" width="3" height="12" fill="#f39400"/>
<rect x="817" y="691" width="3" height="1" fill="#728ead"/>
<rect x="817" y="692" width="3" height="4" fill="#39b56d"/>
<rect x="817" y="696" width="3" height="1" fill="#66dce9"/>
<rect x="817" y="697" width="3" height="1" fill="#626262"/>
<rect x="817" y="698" width="3" height="11" fill="#39b56d"/>
<rect x="817" y="709" width="3" height="32" fill="#66dce9"/>
<rect x="817" y="741" width="3" height="2" fill="#728ead"/>
<rect x="825" y="691" width="3" height="6" fill="#f39400"/>
<rect x="825" y="697" width="3" height="1" fill="#728ead"/>
<rect x="825" y="698" width="3" height="3" fill="#39b56d"/>
<rect x="825" y="701" width="3" height="1" fill="#66dce9"/>
<rect x="825" y="702" width="3" height="1" fill="#626262"/>
<rect x="825" y="703" width="3" height="9" fill="#39b56d"/>
<rect x="825" y="712" width="3" height="28" fill="#66dce9"/>
<rect x="825" y="740" width="3" height="3" fill="#728ead"/>
<rect x="833" y="561" width="3" height="26" fill="#f39400"/>
<rect x="833" y="587" width="3" height="1" fill="#728ead"/>
<rect x="833" y="588" width="3" height="1" fill="#626262"/>
<rect x="833" y="589" width="3" height="12" fill="#39b56d"/>
<rect x="833" y="601" width="3" height="1" fill="#66dce9"/>
<rect x="833" y="602" width="3" height="1" fill="#728ead"/>
<rect x="833" y="603" width="3" height="2" fill="#626262"/>
<rect x="833" y="605" width="3" height="34" fill="#39b56d"/>
<rect x="833" y="639" width="3" height="97" fill="#66dce9"/>
<rect x="833" y="736" width="3" height="7" fill="#728ead"/>
<rect x="841" y="615" width="3" height="22" fill="#f39400"/>
<rect x="841" y="637" width="3" height="1" fill="#728ead"/>
<rect x="841" y="638" width="3" height="2" fill="#626262"/>
<rect x="841" y="640" width="3" height="9" fill="#39b56d"/>
<rect x="841" y="649" width="3" height="1" fill="#66dce9"/>
<rect x="841" y="650" width="3" height="1" fill="#626262"/>
<rect x="841" y="651" width="3" height="26" fill="#39b56d"/>
<rect x="841" y="677" width="3" height="60" fill="#66dce9"/>
<rect x="841" y="737" width="3" height="6" fill="#728ead"/>
<rect x="849" y="666" width="3" height="11" fill="#f39400"/>
<rect x="849" y="677" width="3" height="1" fill="#728ead"/>
<rect x="849" y="678" width="3" height="1" fill="#626262"/>
<rect x="849" y="679" width="3" height="5" fill="#39b56d"/>
<rect x="849" y="684" width="3" height="1" fill="#66dce9"/>
<rect x="849" y="685" width="3" height="1" fill="#728ead"/>
<rect x="849" y="686" width="3" height="1" fill="#626262"/>
<rect x="849" y="687" width="3" height="14" fill="#39b56d"/>
<rect x="849" y="701" width="3" height="39" fill="#66dce9"/>
<rect x="849" y="740" width="3" height="3" fill="#728ead"/>
<rect x="857" y="662" width="3" height="12" fill="#f39400"/>
<rect x="857" y="674" width="3" height="1" fill="#728ead"/>
<rect x="857" y="675" width="3" height="2" fill="#626262"/>
<rect x="857" y="677" width="3" height="5" fill="#39b56d"/>
<rect x="857" y="682" width="3" height="2" fill="#66dce9"/>
<rect x="857" y="684" width="3" height="1" fill="#728ead"/>
<rect x="857" y="685" width="3" height="3" fill="#626262"/>
<rect x="857" y="688" width="3" height="15" fill="#39b56d"/>
<rect x="857" y="703" width="3" height="36" fill="#66dce9"/>
<rect x="857" y="739" width="3" height="4" fill="#728ead"/>
<rect x="865" y="659" width="3" height="12" fill="#f39400"/>
<rect x="865" y="671" width="3" height="1" fill="#728ead"/>
<rect x="865" y="672" width="3" height="6" fill="#39b56d"/>
<rect x="865" y="678" width="3" height="1" fill="#66dce9"/>
<rect x="865" y="679" width="3" height="14" fill="#39b56d"/>
<rect x="865" y="693" width="3" height="47" fill="#66dce9"/>
<rect x="865" y="740" width="3" height="3" fill="#728ead"/>
<rect x="873" y="669" width="3" height="9" fill="#f39400"/>
<rect x="873" y="678" width="3" height="1" fill="#728ead"/>
<rect x="873" y="679" width="3" height="2" fill="#626262"/>
<rect x="873" y="681" width="3" height="6" fill="#39b56d"/>
<rect x="873" y="687" width="3" height="1" fill="#66dce9"/>
<rect x="873" y="688" width="3" height="1" fill="#626262"/>
<rect x="873" y="689" width="3" height="13" fill="#39b56d"/>
<rect x="873" y="702" width="3" height="37" fill="#66dce9"/>
<rect x="873" y="739" width="3" height="4" fill="#728ead"/>
<rect x="881" y="597" width="3" height="17" fill="#f39400"/>
<rect x="881" y="614" width="3" height="1" fill="#728ead"/>
<rect x="881" y="615" width="3" height="1" fill="#626262"/>
<rect x="881" y="616" width="3" height="11" fill="#39b56d"/>
<rect x="881" y="627" width="3" height="1" fill="#66dce9"/>
<rect x="881" y="628" width="3" height="1" fill="#728ead"/>
<rect x="881" y="629" width="3" height="1" fill="#626262"/>
<rect x="881" y="630" width="3" height="27" fill="#39b56d"/>
<rect x="881" y="657" width="3" height="80" fill="#66dce9"/>
<rect x="881" y="737" width="3" height="6" fill="#728ead"/>
<rect x="889" y="629" width="3" height="13" fill="#f39400"/>
<rect x="889" y="642" width="3" height="1" fill="#728ead"/>
<rect x="889" y="643" width="3" height="2" fill="#626262"/>
<rect x="889" y="645" width="3" height="7" fill="#39b56d"/>
<rect x="889" y="652" width="3" height="1" fill="#66dce9"/>
<rect x="889" y="653" width="3" height="1" fill="#728ead"/>
<rect x="889" y="654" width="3" height="2" fill="#626262"/>
<rect x="889" y="656" width="3" height="16" fill="#39b56d"/>
<rect x="889" y="672" width="3" height="66" fill="#66dce9"/>
<rect x="889" y="738" width="3" height="5" fill="#728ead"/>
<rect x="898" y="627" width="3" height="13" fill="#f39400"/>
<rect x="898" y="640" width="3" height="1" fill="#728ead"/>
<rect x="898" y="641" width="3" height="4" fill="#39b56d"/>
<rect x="898" y="645" width="3" height="1" fill="#66dce9"/>
<rect x="898" y="646" width="3" height="1" fill="#626262"/>
<rect x="898" y="647" width="3" height="14" fill="#39b56d"/>
<rect x="898" y="661" width="3" height="78" fill="#66dce9"/>
<rect x="898" y="739" width="3" height="4" fill="#728ead"/>
<rect x="906" y="652" width="3" height="11" fill="#f39400"/>
<rect x="906" y="663" width="3" height="1" fill="#728ead"/>
<rect x="906" y="664" width="3" height="5" fill="#39b56d"/>
<rect x="906" y="669" width="3" height="1" fill="#66dce9"/>
<rect x="906" y="670" width="3" height="17" fill="#39b56d"/>
<rect x="906" y="687" width="3" height="53" fill="#66dce9"/>
<rect x="906" y="740" width="3" height="3" fill="#728ead"/>
<rect x="914" y="538" width="3" height="26" fill="#f39400"/>
<rect x="914" y="564" width="3" height="1" fill="#728ead"/>
<rect x="914" y="565" width="3" height="1" fill="#626262"/>
<rect x="914" y="566" width="3" height="13" fill="#39b56d"/>
<rect x="914" y="579" width="3" height="1" fill="#66dce9"/>
<rect x="914" y="580" width="3" height="1" fill="#728ead"/>
<rect x="914" y="581" width="3" height="1" fill="#626262"/>
<rect x="914" y="582" width="3" height="39" fill="#39b56d"/>
<rect x="914" y="621" width="3" height="115" fill="#66dce9"/>
<rect x="914" y="736" width="3" height="7" fill="#728ead"/>
<rect x="922" y="638" width="3" height="13" fill="#f39400"/>
<rect x="922" y="651" width="3" height="1" fill="#728ead"/>
<rect x="922" y="652" width="3" height="1" fill="#626262"/>
<rect x="922" y="653" width="3" height="6" fill="#39b56d"/>
<rect x="922" y="659" width="3" height="1" fill="#66dce9"/>
<rect x="922" y="660" width="3" height="19" fill="#39b56d"/>
<rect x="922" y="679" width="3" height="60" fill="#66dce9"/>
<rect x="922" y="739" width="3" height="4" fill="#728ead"/>
<rect x="930" y="591" width="3" height="25" fill="#f39400"/>
<rect x="930" y="616" width="3" height="1" fill="#728ead"/>
<rect x="930" y="617" width="3" height="1" fill="#626262"/>
<rect x="930" y="618" width="3" height="6" fill="#39b56d"/>
<rect x="930" y="624" width="3" height="1" fill="#66dce9"/>
<rect x="930" y="625" width="3" height="1" fill="#626262"/>
<rect x="930" y="626" width="3" height="25" fill="#39b56d"/>
<rect x="930" y="651" width="3" height="87" fill="#66dce9"/>
<rect x="930" y="738" width="3" height="5" fill="#728ead"/>
<rect x="938" y="646" width="3" height="16" fill="#f39400"/>
<rect x="938" y="662" width="3" height="1" fill="#728ead"/>
<rect x="938" y="663" width="3" height="5" fill="#39b56d"/>
<rect x="938" y="668" width="3" height="1" fill="#66dce9"/>
<rect x="938" y="669" width="3" height="1" fill="#626262"/>
<rect x="938" y="670" width="3" height="13" fill="#39b56d"/>
<rect x="938" y="683" width="3" height="57" fill="#66dce9"/>
<rect x="938" y="740" width="3" height="3" fill="#728ead"/>
<rect x="946" y="645" width="3" height="15" fill="#f39400"/>
<rect x="946" y="660" width="3" height="1" fill="#728ead"/>
<rect x="946" y="661" width="3" height="6" fill="#39b56d"/>
<rect x="946" y="667" width="3" height="1" fill="#66dce9"/>
<rect x="946" y="668" width="3" height="1" fill="#626262"/>
<rect x="946" y="669" width="3" height="17" fill="#39b56d"/>
<rect x="946" y="686" width="3" height="52" fill="#66dce9"/>
<rect x="946" y="738" width="3" height="5" fill="#728ead"/>
<rect x="954" y="611" width="3" height="18" fill="#f39400"/>
<rect x="954" y="629" width="3" height="1" fill="#728ead"/>
<rect x="954" y="630" width="3" height="6" fill="#39b56d"/>
<rect x="954" y="636" width="3" height="1" fill="#66dce9"/>
<rect x="954" y="637" width="3" height="1" fill="#626262"/>
<rect x="954" y="638" width="3" height="27" fill="#39b56d"/>
<rect x="954" y="665" width="3" height="72" fill="#66dce9"/>
<rect x="954" y="737" width="3" height="6" fill="#728ead"/>
<rect x="962" y="570" width="3" height="27" fill="#f39400"/>
<rect x="962" y="597" width="3" height="1" fill="#728ead"/>
<rect x="962" y="598" width="3" height="2" fill="#626262"/>
<rect x="962" y="600" width="3" height="12" fill="#39b56d"/>
<rect x="962" y="612" width="3" height="1" fill="#66dce9"/>
<rect x="962" y="613" width="3" height="1" fill="#728ead"/>
<rect x="962" y="614" width="3" height="1" fill="#626262"/>
<rect x="962" y="615" width="3" height="25" fill="#39b56d"/>
<rect x="962" y="640" width="3" height="96" fill="#66dce9"/>
<rect x="962" y="736" width="3" height="7" fill="#728ead"/>
<rect x="971" y="654" width="3" height="14" fill="#f39400"/>
<rect x="971" y="668" width="3" height="1" fill="#728ead"/>
<rect x="971" y="669" width="3" height="1" fill="#626262"/>
<rect x="971" y="670" width="3" height="4" fill="#39b56d"/>
<rect x="971" y="674" width="3" height="1" fill="#66dce9"/>
<rect x="971" y="675" width="3" height="1" fill="#626262"/>
<rect x="971" y="676" width="3" height="17" fill="#39b56d"/>
<rect x="971" y="693" width="3" height="47" fill="#66dce9"/>
<rect x="971" y="740" width="3" height="3" fill="#728ead"/>
<rect x="979" y="656" width="3" height="10" fill="#f39400"/>
<rect x="979" y="666" width="3" height="1" fill="#728ead"/>
<rect x="979" y="667" width="3" height="1" fill="#626262"/>
<rect x="979" y="668" width="3" height="5" fill="#39b56d"/>
<rect x="979" y="673" width="3" height="1" fill="#66dce9"/>
<rect x="979" y="674" width="3" height="15" fill="#39b56d"/>
<rect x="979" y="689" width="3" height="50" fill="#66dce9"/>
<rect x="979" y="739" width="3" height="4" fill="#728ead"/>
<rect x="987" y="571" width="3" height="22" fill="#f39400"/>
<rect x="987" y="593" width="3" height="1" fill="#728ead"/>
<rect x="987" y="594" width="3" height="1" fill="#626262"/>
<rect x="987" y="595" width="3" height="14" fill="#39b56d"/>
<rect x="987" y="609" width="3" height="1" fill="#66dce9"/>
<rect x="987" y="610" width="3" height="1" fill="#728ead"/>
<rect x="987" y="611" width="3" height="2" fill="#626262"/>
<rect x="987" y="613" width="3" height="34" fill="#39b56d"/>
<rect x="987" y="647" width="3" height="87" fill="#66dce9"/>
<rect x="987" y="734" width="3" height="9" fill="#728ead"/>
<rect x="995" y="596" width="3" height="21" fill="#f39400"/>
<rect x="995" y="617" width="3" height="1" fill="#728ead"/>
<rect x="995" y="618" width="3" height="8" fill="#39b56d"/>
<rect x="995" y="626" width="3" height="1" fill="#66dce9"/>
<rect x="995" y="627" width="3" height="1" fill="#626262"/>
<rect x="995" y="628" width="3" height="23" fill="#39b56d"/>
<rect x="995" y="651" width="3" height="84" fill="#66dce9"/>
<rect x="995" y="735" width="3" height="8" fill="#728ead"/>
<rect x="1003" y="576" width="3" height="20" fill="#f39400"/>
<rect x="1003" y="596" width="3" height="1" fill="#728ead"/>
<rect x="1003" y="597" width="3" height="1" fill="#626262"/>
<rect x="1003" y="598" width="3" height="8" fill="#39b56d"/>
<rect x="1003" y="606" width="3" height="1" fill="#66dce9"/>
<rect x="1003" y="607" width="3" height="1" fill="#728ead"/>
<rect x="1003" y="608" width="3" height="1" fill="#626262"/>
<rect x="1003" y="609" width="3" height="26" fill="#39b56d"/>
<rect x="1003" y="635" width="3" height="102" fill="#66dce9"/>
<rect x="1003" y="737" width="3" height="6" fill="#728ead"/>
<rect x="1029" y="7" width="1" height="802" fill="#708aab"/>
<polygon points="1029.5,93.7 1038,96.5 1029.5,99.3" fill="#708aab"/>
<polygon points="1029.5,222.7 1038,225.5 1029.5,228.3" fill="#708aab"/>
<polygon points="1029.5,352.7 1038,355.5 1029.5,358.3" fill="#708aab"/>
<polygon points="1029.5,481.7 1038,484.5 1029.5,487.3" fill="#708aab"/>
<polygon points="1029.5,611.7 1038,614.5 1029.5,617.3" fill="#708aab"/>
<polygon points="1029.5,740.7 1038,743.5 1029.5,746.3" fill="#708aab"/>
<rect x="1029" y="31" width="4" height="1" fill="#708aab"/>
<rect x="1029" y="161" width="4" height="1" fill="#708aab"/>
<rect x="1029" y="290" width="4" height="1" fill="#708aab"/>
<rect x="1029" y="420" width="4" height="1" fill="#708aab"/>
<rect x="1029" y="549" width="4" height="1" fill="#708aab"/>
<rect x="1029" y="679" width="4" height="1" fill="#708aab"/>
<rect x="6" y="808" width="1024" height="1" fill="#ffffff"/>
<rect x="129" y="808" width="1" height="4" fill="#ffffff"/>
<rect x="291" y="808" width="1" height="4" fill="#ffffff"/>
<rect x="469" y="808" width="1" height="4" fill="#ffffff"/>
<rect x="647" y="808" width="1" height="4" fill="#ffffff"/>
<rect x="801" y="808" width="1" height="4" fill="#ffffff"/>
<rect x="980" y="808" width="1" height="4" fill="#ffffff"/>
<rect x="1108" y="0" width="2" height="672" fill="#f39400"/>
<path d="M1006.3,561.6 L1001.1,561.1 L995.3,561.1 L990.1,561.9 L986.9,563.6 L985.7,566.8 L985.4,571.4 L986.0,575.5 L988.0,578.4 L989.5,581.6 L993.5,584.8 L999.3,586.2 L1004.5,586.8 L1009.8,588.5 L1015.0,587.9 L1018.5,586.2 L1019.0,581.9 L1019.0,574.3 L1017.9,572.0 L1015.0,568.5 L1012.1,563.9 L1009.8,562.5 L1007.4,562.3" fill="none" stroke="#0a0aff" stroke-width="2" stroke-linejoin="round" stroke-linecap="round"/>
<rect x="39" y="727.4" width="33" height="20.4" fill="rgba(67,67,67,0.33)"/>
<rect x="39" y="727" width="34" height="1" fill="#000"/>
<rect x="72" y="727" width="1" height="20" fill="#000"/>
<rect x="43.5" y="731.5" width="13" height="13" fill="none" stroke="#8a8a8a" stroke-width="1"/>
<rect x="44.5" y="732.5" width="11" height="11" fill="none" stroke="rgba(0,0,0,0.6)" stroke-width="1"/>
<polyline points="45.2,739.7 47.5,736.4 50.4,740.4 54.7,735.3" fill="none" stroke="#c8c8c8" stroke-width="1"/>
<polygon points="63,736 69,736 65.6,739.2" fill="#8a8a8a"/>
<rect x="958" y="862" width="10" height="1" fill="#777"/>
<rect x="974" y="862" width="4" height="1" fill="#777"/>
<rect x="1029" y="862" width="4" height="1" fill="#777"/>
<rect x="1090" y="862" width="15" height="1" fill="#777"/>

</svg>
<div class="leg">
<div class="li" style="top:13.3px"><span class="sw" style="background:#728ead"></span><span class="lt" style="transform:scaleX(0.995)">BITB US Equity</span></div>
<div class="li" style="top:33.3px"><span class="sw" style="background:#66dce9"></span><span class="lt" style="transform:scaleX(1.019)">IBIT US Equity</span></div>
<div class="li" style="top:53.3px"><span class="sw" style="background:#39b56d"></span><span class="lt" style="transform:scaleX(0.947)">FBTC US Equity</span></div>
<div class="li" style="top:73.3px"><span class="sw" style="background:#626262"></span><span class="lt" style="transform:scaleX(0.949)">HODL US Equity</span></div>
<div class="li" style="top:93.3px"><span class="sw" style="background:#728ead"></span><span class="lt" style="transform:scaleX(0.948)">BRRR US Equity</span></div>
<div class="li" style="top:113.3px"><span class="sw" style="background:#66dce9"></span><span class="lt" style="transform:scaleX(0.94)">EZBC US Equity</span></div>
<div class="li" style="top:133.3px"><span class="sw" style="background:#39b56d"></span><span class="lt" style="transform:scaleX(0.955)">ARKB US Equity</span></div>
<div class="li" style="top:153.3px"><span class="sw" style="background:#626262"></span><span class="lt" style="transform:scaleX(0.942)">BTCO US Equity</span></div>
<div class="li" style="top:173.3px"><span class="sw" style="background:#728ead"></span><span class="lt" style="transform:scaleX(0.93)">BTCW US Equity</span></div>
<div class="li" style="top:193.3px"><span class="sw" style="background:#f39400"></span><span class="lt" style="transform:scaleX(0.942)">GBTC US Equity</span></div>
</div>
<div class="yl" style="top:85.4px">10B</div>
<div class="yl" style="top:214.4px">8B</div>
<div class="yl" style="top:344.4px">6B</div>
<div class="yl" style="top:473.4px">4B</div>
<div class="yl" style="top:603.4px">2B</div>
<div class="yl" style="top:732.4px">0</div>
<div class="ml" style="left:28.0px">Feb</div>
<div class="ml" style="left:170.5px">Mar</div>
<div class="ml" style="left:340.5px">Apr</div>
<div class="ml" style="left:518.5px">May</div>
<div class="ml" style="left:684.5px">Jun</div>
<div class="ml" style="left:851.0px">Jul</div>
<div class="ml" style="left:478px;top:837px">2024</div>
<div class="ulab"><span style="left:330.39px;transform:scaleX(1.214)">(</span><span style="left:341.99px;transform:scaleX(0.807)">U</span><span style="left:358.57px;transform:scaleX(0.725)">S</span><span style="left:372.89px;transform:scaleX(0.756)">D</span><span style="left:397.47px;transform:scaleX(0.931)">b</span><span style="left:411.80px;transform:scaleX(1.150)">i</span><span style="left:418.50px;transform:scaleX(1.150)">l</span><span style="left:426.15px;transform:scaleX(1.150)">l</span><span style="left:435.40px;transform:scaleX(1.150)">i</span><span style="left:442.91px;transform:scaleX(0.892)">o</span><span style="left:457.38px;transform:scaleX(1.009)">n</span><span style="left:472.67px;transform:scaleX(0.827)">s</span><span style="left:485.60px;transform:scaleX(1.157)">)</span></div>
</body></html>
